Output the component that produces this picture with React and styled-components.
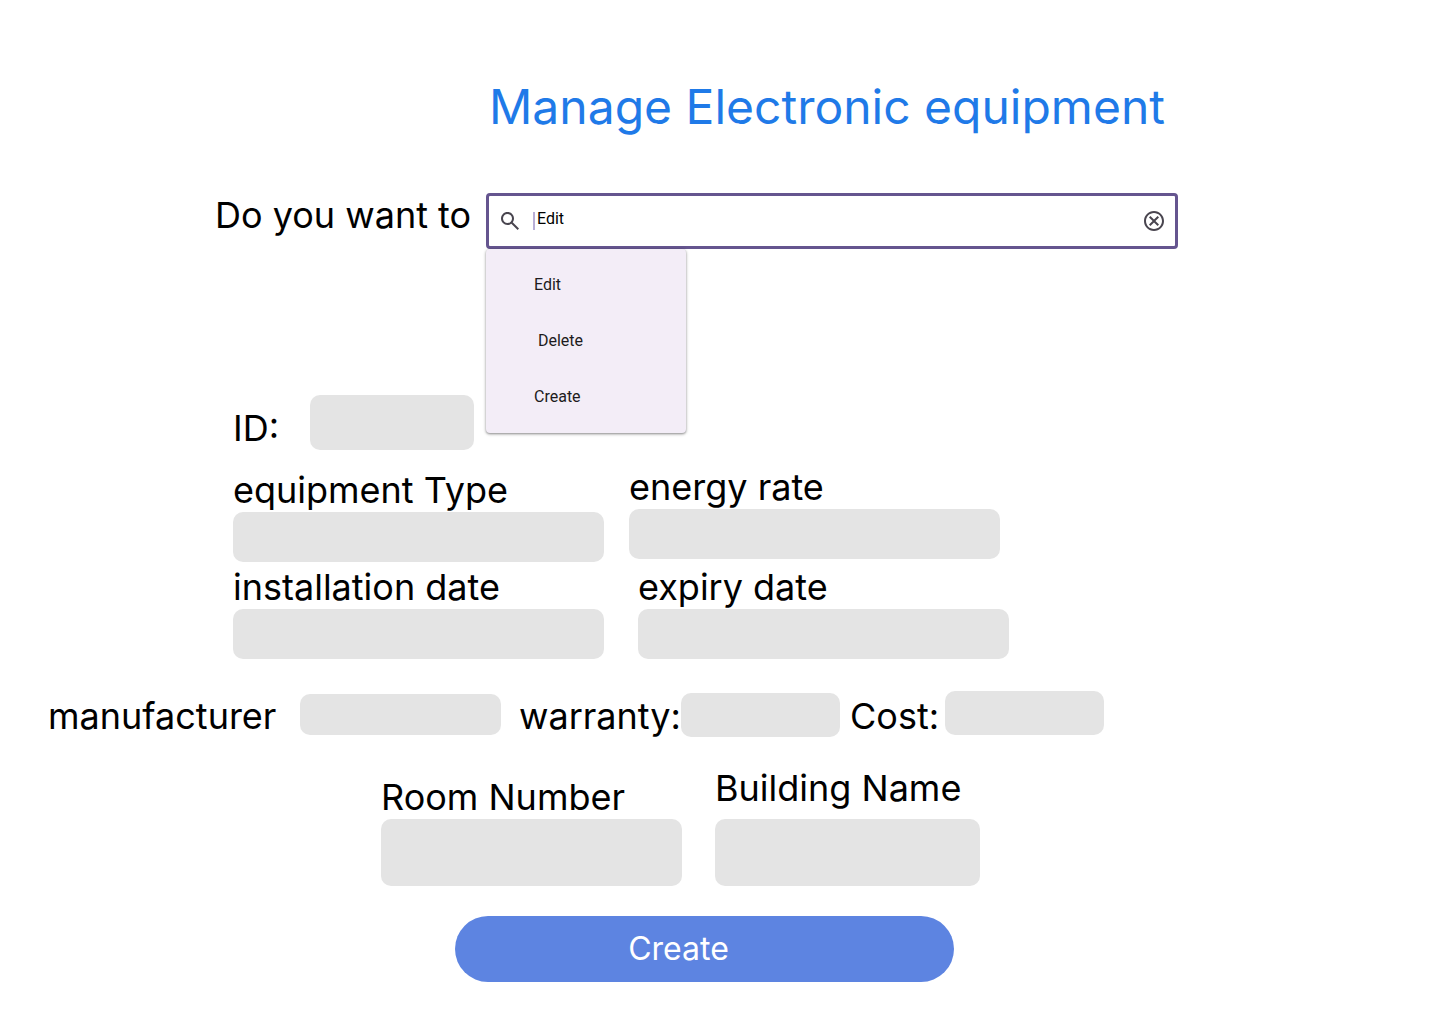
import React, { useState } from "react";
import styled, { createGlobalStyle } from "styled-components";

const GlobalStyle = createGlobalStyle`
  *, *::before, *::after { box-sizing: border-box; }
  body {
    margin: 0;
    background: #ffffff;
    color: #000000;
    font-family: Inter, "Liberation Sans", sans-serif;
  }
`;

const Page = styled.main`
  padding: 78px 48px 42px;
`;

const Title = styled.h1`
  margin: 0 0 57px 441px;
  color: #1f7ae8;
  font-size: 48px;
  font-weight: 400;
  line-height: 58px;
`;

const ActionRow = styled.div`
  display: flex;
  align-items: flex-start;
  justify-content: space-between;
  width: 963px;
  max-width: 100%;
  margin: 0 0 146px 167px;
`;

const Label = styled.label`
  font-size: 36px;
  line-height: 44px;
  white-space: nowrap;
`;

const Combo = styled.div`
  position: relative;
  flex: 0 1 692px;
`;

const SearchBox = styled.div`
  display: flex;
  align-items: center;
  height: 56px;
  padding: 0 9px;
  border: 3px solid #65558f;
  border-radius: 4px;
  background: #ffffff;
`;

const Icon = styled.svg`
  display: block;
  flex: none;
  width: 24px;
  height: 24px;
  fill: #49454f;
`;

const Caret = styled.span`
  width: 2px;
  height: 18px;
  margin: 0 2px 0 11px;
  background: #b9aed6;
`;

const SearchInput = styled.input`
  flex: 1;
  min-width: 0;
  padding: 0 0 4px;
  border: 0;
  outline: 0;
  background: transparent;
  color: #000000;
  font: 400 16px/24px Roboto, "Liberation Sans", sans-serif;
`;

const ClearButton = styled.button`
  padding: 0;
  border: 0;
  background: transparent;
  cursor: pointer;
`;

const Menu = styled.div`
  position: absolute;
  top: 100%;
  left: 0;
  z-index: 1;
  width: 200px;
  padding: 8px 0;
  border-radius: 4px;
  background: #f3edf7;
  box-shadow: 0 1px 2px rgba(0, 0, 0, 0.3), 0 1px 3px 1px rgba(0, 0, 0, 0.15);
`;

const MenuItem = styled.button`
  display: block;
  width: 100%;
  height: 56px;
  padding: 0 48px;
  border: 0;
  background: transparent;
  color: #1d1b20;
  font: 400 16px/24px Roboto, "Liberation Sans", sans-serif;
  text-align: left;
  white-space: pre;
  cursor: pointer;
`;

const Input = styled.input`
  display: block;
  width: ${(p) => p.$width}px;
  max-width: 100%;
  height: ${(p) => p.$height}px;
  padding: 0 12px;
  border: 0;
  border-radius: 10px;
  background: #e4e4e4;
  font: 400 24px/32px Inter, "Liberation Sans", sans-serif;
`;

const StackedField = styled.div`
  display: flex;
  flex-direction: column;
  gap: ${(p) => p.$gap || 0}px;
`;

const InlineField = styled.div`
  display: flex;
  align-items: flex-end;
  justify-content: space-between;
  width: ${(p) => p.$width}px;

  ${Input} {
    margin-bottom: ${(p) => p.$raise || 0}px;
  }
`;

const IdRow = styled.div`
  margin: 0 0 15px 185px;
`;

const DetailColumns = styled.div`
  display: flex;
  align-items: flex-end;
  gap: 25px;
  margin: 0 0 32px 185px;
`;

const DetailColumn = styled.div`
  display: flex;
  flex-direction: column;
  gap: ${(p) => p.$gap}px;
  width: ${(p) => p.$width}px;

  > :last-child {
    align-self: flex-end;
  }
`;

const PurchaseRow = styled.div`
  display: flex;
  align-items: flex-end;
  gap: 18px;
  margin-bottom: 28px;
`;

const PriceGroup = styled.div`
  display: flex;
  align-items: flex-end;
  gap: 10px;
`;

const LocationRow = styled.div`
  display: flex;
  align-items: flex-end;
  gap: 33px;
  margin: 0 0 30px 333px;
`;

const SubmitButton = styled.button`
  display: block;
  width: 499px;
  max-width: 100%;
  height: 66px;
  margin-left: 407px;
  padding: 0 52px 0 0;
  border: 0;
  border-radius: 33px;
  background: #5d84e1;
  color: #ffffff;
  font: 400 32px/40px Inter, "Liberation Sans", sans-serif;
  cursor: pointer;
`;

function Stacked({ id, label, width, height, gap }) {
  return (
    <StackedField $gap={gap}>
      <Label htmlFor={id}>{label}</Label>
      <Input id={id} $width={width} $height={height} />
    </StackedField>
  );
}

function Inline({ id, label, total, width, height, raise }) {
  return (
    <InlineField $width={total} $raise={raise}>
      <Label htmlFor={id}>{label}</Label>
      <Input id={id} $width={width} $height={height} />
    </InlineField>
  );
}

const actions = ["Edit", " Delete", "Create"];

export default function App() {
  const [action, setAction] = useState("Edit");

  return (
    <>
      <GlobalStyle />
      <Page>
        <Title>Manage Electronic equipment</Title>

        <ActionRow>
          <Label htmlFor="action">Do you want to</Label>
          <Combo>
            <SearchBox>
              <Icon viewBox="0 0 24 24" aria-hidden="true">
                <path d="M19.6 21l-6.3-6.3c-.5.4-1.075.717-1.725.95-.65.233-1.342.35-2.075.35-1.817 0-3.354-.63-4.612-1.888C3.629 12.854 3 11.317 3 9.5s.63-3.354 1.888-4.612C6.146 3.629 7.683 3 9.5 3s3.354.63 4.613 1.888C15.37 6.146 16 7.683 16 9.5c0 .733-.117 1.425-.35 2.075-.233.65-.55 1.225-.95 1.725l6.3 6.3-1.4 1.4zM9.5 14c1.25 0 2.313-.438 3.188-1.313C13.563 11.813 14 10.75 14 9.5s-.438-2.313-1.313-3.188C11.813 5.438 10.75 5 9.5 5s-2.313.438-3.188 1.313C5.438 7.188 5 8.25 5 9.5s.438 2.313 1.313 3.188C7.188 13.563 8.25 14 9.5 14z" />
              </Icon>
              <Caret />
              <SearchInput id="action" value={action} onChange={(e) => setAction(e.target.value)} />
              <ClearButton type="button" aria-label="Clear" onClick={() => setAction("")}>
                <Icon viewBox="0 0 24 24" aria-hidden="true">
                  <path d="M8.4 17l3.6-3.6 3.6 3.6 1.4-1.4-3.6-3.6L17 8.4 15.6 7 12 10.6 8.4 7 7 8.4l3.6 3.6L7 15.6 8.4 17zM12 2C6.47 2 2 6.47 2 12s4.47 10 10 10 10-4.47 10-10S17.53 2 12 2zm0 18c-4.41 0-8-3.59-8-8s3.59-8 8-8 8 3.59 8 8-3.59 8-8 8z" />
                </Icon>
              </ClearButton>
            </SearchBox>
            <Menu>
              {actions.map((name) => (
                <MenuItem key={name} type="button" onClick={() => setAction(name.trim())}>
                  {name}
                </MenuItem>
              ))}
            </Menu>
          </Combo>
        </ActionRow>

        <IdRow>
          <Inline id="equipment-id" label="ID:" total={241} width={164} height={55} />
        </IdRow>

        <DetailColumns>
          <DetailColumn $gap={3} $width={371}>
            <Stacked id="type" label="equipment Type" width={371} height={50} />
            <Stacked id="installed" label="installation date" width={371} height={50} />
          </DetailColumn>
          <DetailColumn $gap={6} $width={380}>
            <Stacked id="rate" label="energy rate" width={371} height={50} />
            <Stacked id="expiry" label="expiry date" width={371} height={50} />
          </DetailColumn>
        </DetailColumns>

        <PurchaseRow>
          <Inline id="manufacturer" label="manufacturer" total={453} width={201} height={41} raise={3} />
          <PriceGroup>
            <Inline id="warranty" label="warranty:" total={321} width={159} height={44} raise={1} />
            <Inline id="cost" label="Cost:" total={254} width={159} height={44} raise={3} />
          </PriceGroup>
        </PurchaseRow>

        <LocationRow>
          <Stacked id="room" label="Room Number" width={301} height={67} />
          <Stacked id="building" label="Building Name" width={265} height={67} gap={9} />
        </LocationRow>

        <SubmitButton type="button">Create</SubmitButton>
      </Page>
    </>
  );
}
